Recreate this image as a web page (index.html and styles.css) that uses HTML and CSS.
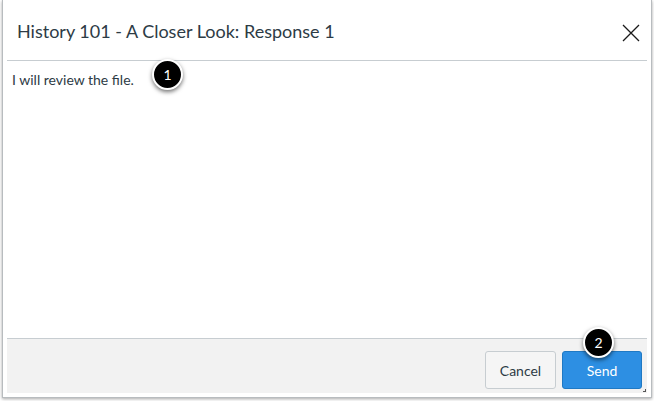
FILE: index.html
```html
<!DOCTYPE html>
<html>
<head>
<meta charset="utf-8">
<link rel="stylesheet" href="styles.css">
</head>
<body>
<div class="dialog">
  <div class="inner">
    <div class="header">
      <h1 class="title">History 101 - A Closer Look: Response 1</h1>
      <button class="close" aria-label="Close">
        <svg width="18" height="18" viewBox="0 0 18 18"><path d="M1 1L17 17M17 1L1 17" stroke="#1a1a1a" stroke-width="1.3" fill="none"/></svg>
      </button>
    </div>
    <div class="content">
      <p class="message">I will review the file.</p>
      <span class="badge badge-1">1</span>
    </div>
    <div class="footer">
      <button class="btn btn-cancel">Cancel</button>
      <button class="btn btn-send">Send</button>
      <span class="badge badge-2">2</span>
      <span class="grip"></span>
    </div>
  </div>
</div>
</body>
</html>
```
FILE: styles.css
```css
* { box-sizing: border-box; }
html, body { margin: 0; padding: 0; background: #ffffff; }
body { width: 654px; height: 401px; overflow: hidden; font-family: Lato, "Noto Sans", sans-serif; color: #2d3b45; }
.dialog {
  margin: 0 2px 0 2px;
  width: 650px;
  height: 398px;
  border: 1px solid #b8bcbf;
  border-top: none;
  box-shadow: 0 1px 3px rgba(0,0,0,0.35);
  background: #fff;
  padding: 0 4px 4px 4px;
}
.inner { height: 100%; display: flex; flex-direction: column; position: relative; }
.header {
  height: 61px;
  border-bottom: 1px solid #c7cdd1;
  display: flex;
  align-items: center;
  justify-content: space-between;
  padding: 0 7px 0 10px;
}
.title { margin: 0; font-size: 18px; font-weight: 400; color: #2d3b45; position: relative; top: 1px; }
.close { background: none; border: none; padding: 0; width: 18px; height: 18px; margin-top: 6px; display: block; }
.close svg { display: block; }
.content { flex: 1; position: relative; padding: 10px 5px; }
.message { margin: 0; font-size: 14px; line-height: 17px; }
.footer {
  height: 55px;
  background: #f2f2f2;
  border-top: 1px solid #c7cdd1;
  display: flex;
  justify-content: flex-end;
  align-items: flex-end;
  gap: 6px;
  padding: 0 5px 4px 0;
  position: relative;
}
.btn {
  height: 38px;
  font-family: Lato, "Noto Sans", sans-serif;
  font-size: 14px;
  border-radius: 3px;
  padding: 0;
}
.btn-cancel { width: 71px; background: #f5f5f5; border: 1px solid #c7cdd1; color: #2d3b45; }
.btn-send { width: 80px; background: #2d8fe3; border: 1px solid #1f79c4; color: #fff; }
.badge {
  position: absolute;
  width: 31px; height: 31px;
  border-radius: 50%;
  background: #000;
  border: 2px solid #fff;
  box-shadow: 0 2px 4px rgba(0,0,0,0.55);
  color: #fff;
  font-size: 14px;
  display: flex; align-items: center; justify-content: center;
}
.badge-1 { left: 145px; top: -2px; }
.badge-2 { left: 576px; top: -12px; }
.grip {
  position: absolute; right: 1px; bottom: 1px; width: 3px; height: 3px;
  border-right: 1px solid #555; border-bottom: 1px solid #555;
}
```
